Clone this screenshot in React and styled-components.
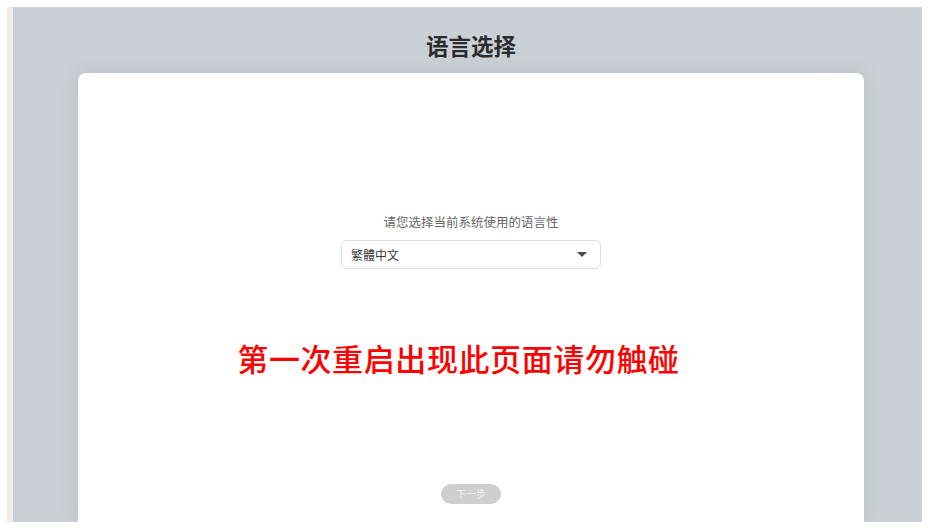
import React from "react";
import styled, { createGlobalStyle } from "styled-components";

const Global = createGlobalStyle`
  html, body { margin: 0; padding: 0; background: #ffffff; }
  body { font-family: "Noto Sans CJK SC", "Noto Sans", sans-serif; }
  * { box-sizing: border-box; }
`;

const Frame = styled.div`
  width: 934px;
  height: 531px;
  padding: 7px 12px 9px 7px;
  background: #ffffff;
`;

const Panel = styled.div`
  height: 100%;
  display: flex;
  flex-direction: column;
  background: #cbd0d7;
  border-left: 6px solid #efedeb;
  padding: 0 58px 0 65px;
  overflow: hidden;
`;

const Header = styled.header`
  height: 66px;
  display: flex;
  align-items: center;
  justify-content: center;
  padding-top: 11px;
`;

const Title = styled.h1`
  margin: 0;
  font-size: 22.5px;
  line-height: 1;
  font-weight: 700;
  color: #2b2b2b;
`;

const Card = styled.main`
  flex: 1;
  display: flex;
  flex-direction: column;
  align-items: center;
  background: #ffffff;
  border-radius: 8px 8px 0 0;
  box-shadow: 0 0 18px rgba(90, 100, 115, 0.18);
  padding: 140px 0 18px;
`;

const Prompt = styled.p`
  margin: 0;
  font-size: 12.5px;
  line-height: 18px;
  color: #666666;
`;

const Select = styled.div`
  margin-top: 9px;
  width: 260px;
  height: 29px;
  border: 1px solid #dcdfe4;
  border-radius: 6px;
  display: flex;
  align-items: center;
  justify-content: space-between;
  padding: 0 13px 0 9px;
  font-size: 12px;
  color: #3a3a3a;
`;

const Caret = styled.span`
  width: 0;
  height: 0;
  border-left: 5px solid transparent;
  border-right: 5px solid transparent;
  border-top: 5px solid #4a4a4a;
`;

const Warning = styled.div`
  margin-top: 69px;
  margin-right: 25px;
  font-size: 31px;
  line-height: 40px;
  font-weight: 500;
  color: #ff0000;
  letter-spacing: 0.6px;
`;

const NextButton = styled.button`
  margin-top: auto;
  width: 60px;
  height: 20px;
  border: none;
  border-radius: 10px;
  background: #cfcfcf;
  color: #f2f2f2;
  font-family: inherit;
  font-size: 10px;
  line-height: 20px;
  padding: 0;
`;

export default function App() {
  return (
    <>
      <Global />
      <Frame>
        <Panel>
          <Header>
            <Title>语言选择</Title>
          </Header>
          <Card>
            <Prompt>请您选择当前系统使用的语言性</Prompt>
            <Select>
              <span>繁體中文</span>
              <Caret />
            </Select>
            <Warning>第一次重启出现此页面请勿触碰</Warning>
            <NextButton disabled>下一步</NextButton>
          </Card>
        </Panel>
      </Frame>
    </>
  );
}
